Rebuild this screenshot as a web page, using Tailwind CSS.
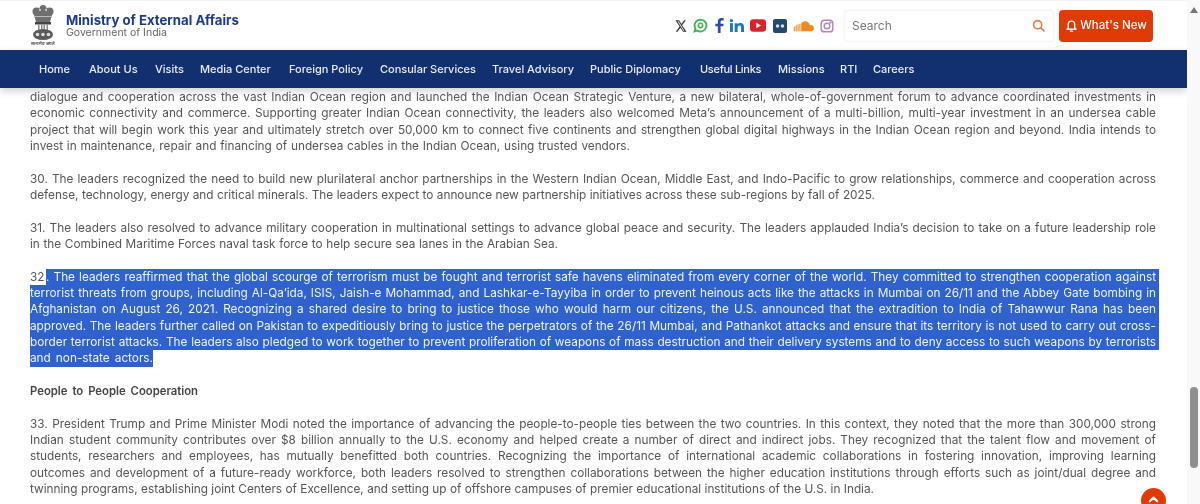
<!DOCTYPE html>
<html lang="en">
<head>
  <meta charset="UTF-8">
  <title>Ministry of External Affairs</title>
  <script src="https://cdn.jsdelivr.net/npm/@tailwindcss/browser@4"></script>
</head>
<body class="h-[504px] overflow-hidden bg-white font-['Inter',sans-serif] text-[#555]">
  <div class="relative flex h-[504px] blur-[0.5px]">
    <div class="w-[1187px]">
      <!-- top header -->
      <header class="flex h-[50px] items-center border-t border-gray-100 pl-[31px]">
        <div class="flex w-[24px] flex-col items-center">
          <svg class="h-[35px] w-[24px] text-[#6f6f6f]" viewBox="0 0 24 35" fill="currentColor">
            <circle cx="12" cy="3.500" r="3.500"/>
            <circle cx="5.500" cy="6.500" r="4"/>
            <circle cx="18.500" cy="6.500" r="4"/>
            <circle cx="12" cy="9" r="5.500"/>
            <path d="M2.500 8h19L19 17H5z"/>
            <circle cx="9" cy="5" r="1" fill="#ddd"/>
            <circle cx="15" cy="5" r="1" fill="#ddd"/>
            <path d="M4 11h16v1H4z" fill="#bbb"/>
            <rect x="4" y="17" width="16" height="2.500" fill="#444"/>
            <path d="M7 19.500h1.500V26H7zM10 19.500h1.500V26H10zM12.500 19.500H14V26h-1.500zM15.500 19.500H17V26h-1.500z" fill="#888"/>
            <ellipse cx="12" cy="29.500" rx="10" ry="5.500" fill="#5a5a5a"/>
            <circle cx="6.500" cy="29.500" r="1.800" fill="#ddd"/>
            <circle cx="12" cy="29.500" r="1.800" fill="#ddd"/>
            <circle cx="17.500" cy="29.500" r="1.800" fill="#ddd"/>
          </svg>
          <span class="mt-[1px] text-[4.500px] leading-[5px] font-bold whitespace-nowrap text-[#555]">सत्यमेव जयते</span>
        </div>
        <div class="ml-[11px] -mt-[1px]">
          <div class="text-[13.200px] leading-[15px] font-bold text-[#1b3a8f]">Ministry of External Affairs</div>
          <div class="text-[10.500px] leading-[9px] text-[#666]">Government of India</div>
        </div>
        <div class="ml-auto flex items-center">
          <!-- social icons -->
          <div class="flex items-center">
            <svg class="h-[14px] w-[12px] text-[#333]" viewBox="0 0 24 24" fill="currentColor" preserveAspectRatio="none"><path d="M18.200 2h3.400l-7.400 8.500L23 22h-6.800l-5.300-7-6.100 7H1.400l7.900-9L1 2h7l4.800 6.400zM17 20h1.900L7 3.900H5z"/></svg>
            <svg class="ml-[6px] h-[15px] w-[15px] text-[#3fb55a]" viewBox="0 0 24 24" fill="none" stroke="currentColor" stroke-width="3"><path d="M12 2.500a9.500 9.500 0 0 0-8.100 14.400L2.500 21.500l4.700-1.300A9.500 9.500 0 1 0 12 2.500z"/><circle cx="12" cy="12" r="3.500" stroke-width="2.500"/></svg>
            <svg class="ml-[7px] h-[15px] w-[9px] text-[#2b4f9e]" viewBox="0 0 10 18" fill="currentColor"><path d="M3 18v-8H0V7h3V4.500C3 1.500 4.800 0 7.400 0H10v3H8c-1.300 0-1.700.7-1.700 1.700V7H10l-.5 3H6.300v8z"/></svg>
            <svg class="ml-[6px] h-[13px] w-[14px] text-[#1f78b4]" viewBox="0 0 24 22" fill="currentColor"><rect x="0" y="7" width="5" height="15"/><circle cx="2.500" cy="2.800" r="2.800"/><path d="M8 7h4.800v2.200C13.700 7.700 15.500 6.700 17.800 6.700c4.400 0 6.200 2.700 6.200 7V22h-5v-7.500c0-2.200-.8-3.500-2.700-3.500S13 12.400 13 14.500V22H8z"/></svg>
            <svg class="ml-[6px] h-[13px] w-[16px]" viewBox="0 0 24 19"><rect width="24" height="19" rx="5" fill="#d9232a"/><path d="M9.500 5.500v8l7-4z" fill="#fff"/></svg>
            <svg class="ml-[7px] h-[14px] w-[14px]" viewBox="0 0 20 20"><rect width="20" height="20" rx="3" fill="#24496f"/><circle cx="6.500" cy="10" r="2.500" fill="#d7e0ea"/><circle cx="13.500" cy="10" r="2.500" fill="#d7e0ea"/></svg>
            <svg class="ml-[6px] h-[12px] w-[21px] text-[#f28a1e]" viewBox="0 0 28 14" fill="currentColor"><path d="M11 14V3.500C12.200 1.500 14 .5 16 .5c3.500 0 6 2.300 6.500 5.500 3-.8 5.500 1.200 5.500 4 0 2.300-1.800 4-4 4z"/><rect x="8.500" y="4" width="1.500" height="10"/><rect x="6" y="5" width="1.500" height="9"/><rect x="3.500" y="6" width="1.500" height="8"/><rect x="1" y="8" width="1.500" height="6"/></svg>
            <svg class="ml-[6px] h-[14px] w-[14px] text-[#b784b8]" viewBox="0 0 24 24" fill="none" stroke="currentColor" stroke-width="2.500"><rect x="2" y="2" width="20" height="20" rx="5.500"/><circle cx="12" cy="12" r="4.800"/><circle cx="17.800" cy="6.200" r=".8" fill="currentColor"/></svg>
          </div>
          <!-- search -->
          <div class="ml-[10px] flex h-[32px] w-[210px] items-center justify-between rounded-[4px] border border-gray-100 pr-[8px] pl-[7px] shadow-[0_0_2px_rgba(0,0,0,0.06)]">
            <span class="text-[12px] text-[#777]">Search</span>
            <svg class="h-[13px] w-[13px] text-[#e8794a]" viewBox="0 0 24 24" fill="none" stroke="currentColor" stroke-width="3" stroke-linecap="round"><circle cx="10.500" cy="10.500" r="7.500"/><path d="M16.500 16.500L22 22"/></svg>
          </div>
          <!-- what's new -->
          <div class="mr-[34px] ml-[5px] flex h-[32px] w-[94px] items-center justify-center gap-[2px] rounded-[4px] bg-[#e03a06] text-[11.500px] font-medium text-white">
            <svg class="h-[13px] w-[13px]" viewBox="0 0 24 24" fill="none" stroke="currentColor" stroke-width="2.500" stroke-linejoin="round" stroke-linecap="round"><path d="M6 17V10a6 6 0 0 1 12 0v7l2.500 2h-17z"/><path d="M10 22.500h4"/></svg>
            <span>What's New</span>
          </div>
        </div>
      </header>

      <!-- main nav -->
      <nav class="flex h-[38px] items-center bg-[#12306f] pl-[39px] text-[11px] font-medium text-[#e8ecf5] shadow-[0_3px_8px_rgba(0,0,0,0.18)]">
        <a class="w-[50px]">Home</a>
        <a class="w-[66px]">About Us</a>
        <a class="w-[45px]">Visits</a>
        <a class="w-[89px]">Media Center</a>
        <a class="w-[91px]">Foreign Policy</a>
        <a class="w-[112px]">Consular Services</a>
        <a class="w-[98px]">Travel Advisory</a>
        <a class="w-[110px]">Public Diplomacy</a>
        <a class="w-[78px] tracking-[-0.3px]">Useful Links</a>
        <a class="w-[62px]">Missions</a>
        <a class="w-[33px]">RTI</a>
        <a>Careers</a>
      </nav>

      <!-- article -->
      <main class="w-[1159px] pt-[1px] pl-[30px] text-[11.800px] leading-[16.330px] [text-align-last:justify]">
        <p class="pr-[3px]">
          <span class="block">dialogue and cooperation across the vast Indian Ocean region and launched the Indian Ocean Strategic Venture, a new bilateral, whole-of-government forum to advance coordinated investments in</span>
          <span class="block">economic connectivity and commerce. Supporting greater Indian Ocean connectivity, the leaders also welcomed Meta’s announcement of a multi-billion, multi-year investment in an undersea cable</span>
          <span class="block">project that will begin work this year and ultimately stretch over 50,000 km to connect five continents and strengthen global digital highways in the Indian Ocean region and beyond. India intends to</span>
          <span class="block w-[600px]">invest in maintenance, repair and financing of undersea cables in the Indian Ocean, using trusted vendors.</span>
        </p>
        <p class="mt-[16.330px] pr-[3px]">
          <span class="block">30. The leaders recognized the need to build new plurilateral anchor partnerships in the Western Indian Ocean, Middle East, and Indo-Pacific to grow relationships, commerce and cooperation across</span>
          <span class="block w-[845px]">defense, technology, energy and critical minerals. The leaders expect to announce new partnership initiatives across these sub-regions by fall of 2025.</span>
        </p>
        <p class="mt-[16.330px] pr-[3px]">
          <span class="block">31. The leaders also resolved to advance military cooperation in multinational settings to advance global peace and security. The leaders applauded India’s decision to take on a future leadership role</span>
          <span class="block w-[528px]">in the Combined Maritime Forces naval task force to help secure sea lanes in the Arabian Sea.</span>
        </p>
        <p class="mt-[16.330px] text-[#eef2fb]">
          <span class="block bg-[#2f62cc] pr-[3px]"><span class="inline-block h-[16.330px] w-[16px] bg-white text-[#555] [text-align-last:left]">32</span>. The leaders reaffirmed that the global scourge of terrorism must be fought and terrorist safe havens eliminated from every corner of the world. They committed to strengthen cooperation against</span>
          <span class="block bg-[#2f62cc] pr-[3px]">terrorist threats from groups, including Al-Qa’ida, ISIS, Jaish-e Mohammad, and Lashkar-e-Tayyiba in order to prevent heinous acts like the attacks in Mumbai on 26/11 and the Abbey Gate bombing in</span>
          <span class="block bg-[#2f62cc] pr-[3px]">Afghanistan on August 26, 2021. Recognizing a shared desire to bring to justice those who would harm our citizens, the U.S. announced that the extradition to India of Tahawwur Rana has been</span>
          <span class="block bg-[#2f62cc] pr-[3px]">approved. The leaders further called on Pakistan to expeditiously bring to justice the perpetrators of the 26/11 Mumbai, and Pathankot attacks and ensure that its territory is not used to carry out cross-</span>
          <span class="block bg-[#2f62cc] pr-[3px]">border terrorist attacks. The leaders also pledged to work together to prevent proliferation of weapons of mass destruction and their delivery systems and to deny access to such weapons by terrorists</span>
          <span class="block w-[123px] bg-[#2f62cc]">and non-state actors.</span>
        </p>
        <p class="mt-[16.330px] w-[168px] text-[11.300px] whitespace-nowrap font-semibold text-[#444]">People to People Cooperation</p>
        <p class="mt-[16.330px] pr-[3px]">
          <span class="block">33. President Trump and Prime Minister Modi noted the importance of advancing the people-to-people ties between the two countries. In this context, they noted that the more than 300,000 strong</span>
          <span class="block">Indian student community contributes over $8 billion annually to the U.S. economy and helped create a number of direct and indirect jobs. They recognized that the talent flow and movement of</span>
          <span class="block">students, researchers and employees, has mutually benefitted both countries. Recognizing the importance of international academic collaborations in fostering innovation, improving learning</span>
          <span class="block">outcomes and development of a future-ready workforce, both leaders resolved to strengthen collaborations between the higher education institutions through efforts such as joint/dual degree and</span>
          <span class="block w-[844px]">twinning programs, establishing joint Centers of Excellence, and setting up of offshore campuses of premier educational institutions of the U.S. in India.</span>
        </p>
      </main>
    </div>

    <!-- page scrollbar -->
    <div class="relative w-[13px] bg-[#f9f9f9]">
      <div class="mx-auto mt-[7px] h-0 w-0 border-x-[4px] border-b-[6px] border-x-transparent border-b-[#777]"></div>
      <div class="absolute top-[387px] left-[3px] h-[81px] w-[8px] rounded-full bg-[#8f8f8f]"></div>
    </div>

    <!-- back to top -->
    <div class="absolute top-[488px] left-[1141px] flex h-[25px] w-[25px] justify-center rounded-full bg-[#e03a06] pt-[7px]">
      <svg class="h-[8px] w-[11px] text-white" viewBox="0 0 12 8" fill="none" stroke="currentColor" stroke-width="2.400" stroke-linecap="round" stroke-linejoin="round"><path d="M2 6.500L6 2.500l4 4"/></svg>
    </div>
  </div>
</body>
</html>
